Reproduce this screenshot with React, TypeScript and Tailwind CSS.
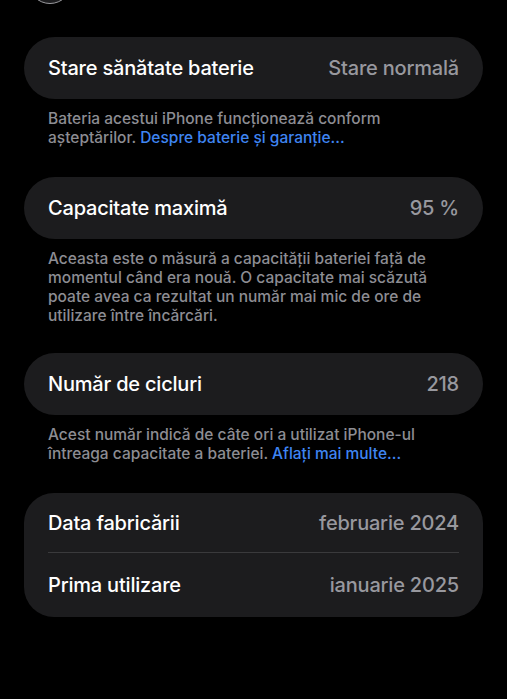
import React from "react";

const font = { fontFamily: "Inter, 'Noto Sans', sans-serif" };

function Row({ label, value }: { label: string; value: string }) {
  return (
    <div className="flex h-[62px] items-center justify-between rounded-[31px] bg-[#1c1c1e] px-6">
      <span className="text-[20px] font-medium tracking-[-0.2px] text-white">{label}</span>
      <span className="text-[20px] font-medium tracking-[-0.2px] text-[#98989e]">{value}</span>
    </div>
  );
}

function Footer({ children }: { children: React.ReactNode }) {
  return (
    <p className="mt-[10px] px-6 text-[15.5px] font-medium leading-[19px] text-[#8d8d93]">{children}</p>
  );
}

export default function App() {
  return (
    <div className="h-[699px] w-full overflow-hidden bg-black" style={font}>
      <div className="ml-[28px] mt-[-40px] h-[44px] w-[44px] rounded-full border border-[#9a9a9e] bg-[#1c1c1e]" />
      <div className="px-6 pt-[33px]">
        <Row label="Stare sănătate baterie" value="Stare normală" />
        <Footer>
          Bateria acestui iPhone funcționează conform
          <br />
          așteptărilor. <span className="text-[#3f85f2]">Despre baterie și garanție...</span>
        </Footer>

        <div className="mt-[30px]">
          <Row label="Capacitate maximă" value="95 %" />
        </div>
        <Footer>
          Aceasta este o măsură a capacității bateriei față de
          <br />
          momentul când era nouă. O capacitate mai scăzută
          <br />
          poate avea ca rezultat un număr mai mic de ore de
          <br />
          utilizare între încărcări.
        </Footer>

        <div className="mt-[28px]">
          <Row label="Număr de cicluri" value="218" />
        </div>
        <Footer>
          Acest număr indică de câte ori a utilizat iPhone-ul
          <br />
          întreaga capacitate a bateriei. <span className="text-[#3f85f2]">Aflați mai multe...</span>
        </Footer>

        <div className="mt-[30px] rounded-[30px] bg-[#1c1c1e] px-6">
          <div className="flex h-[60px] items-center justify-between border-b border-[#3a3a3c]">
            <span className="text-[20px] font-medium tracking-[-0.2px] text-white">Data fabricării</span>
            <span className="text-[20px] font-medium tracking-[-0.2px] text-[#98989e]">februarie 2024</span>
          </div>
          <div className="flex h-[64px] items-center justify-between">
            <span className="text-[20px] font-medium tracking-[-0.2px] text-white">Prima utilizare</span>
            <span className="text-[20px] font-medium tracking-[-0.2px] text-[#98989e]">ianuarie 2025</span>
          </div>
        </div>
      </div>
    </div>
  );
}
